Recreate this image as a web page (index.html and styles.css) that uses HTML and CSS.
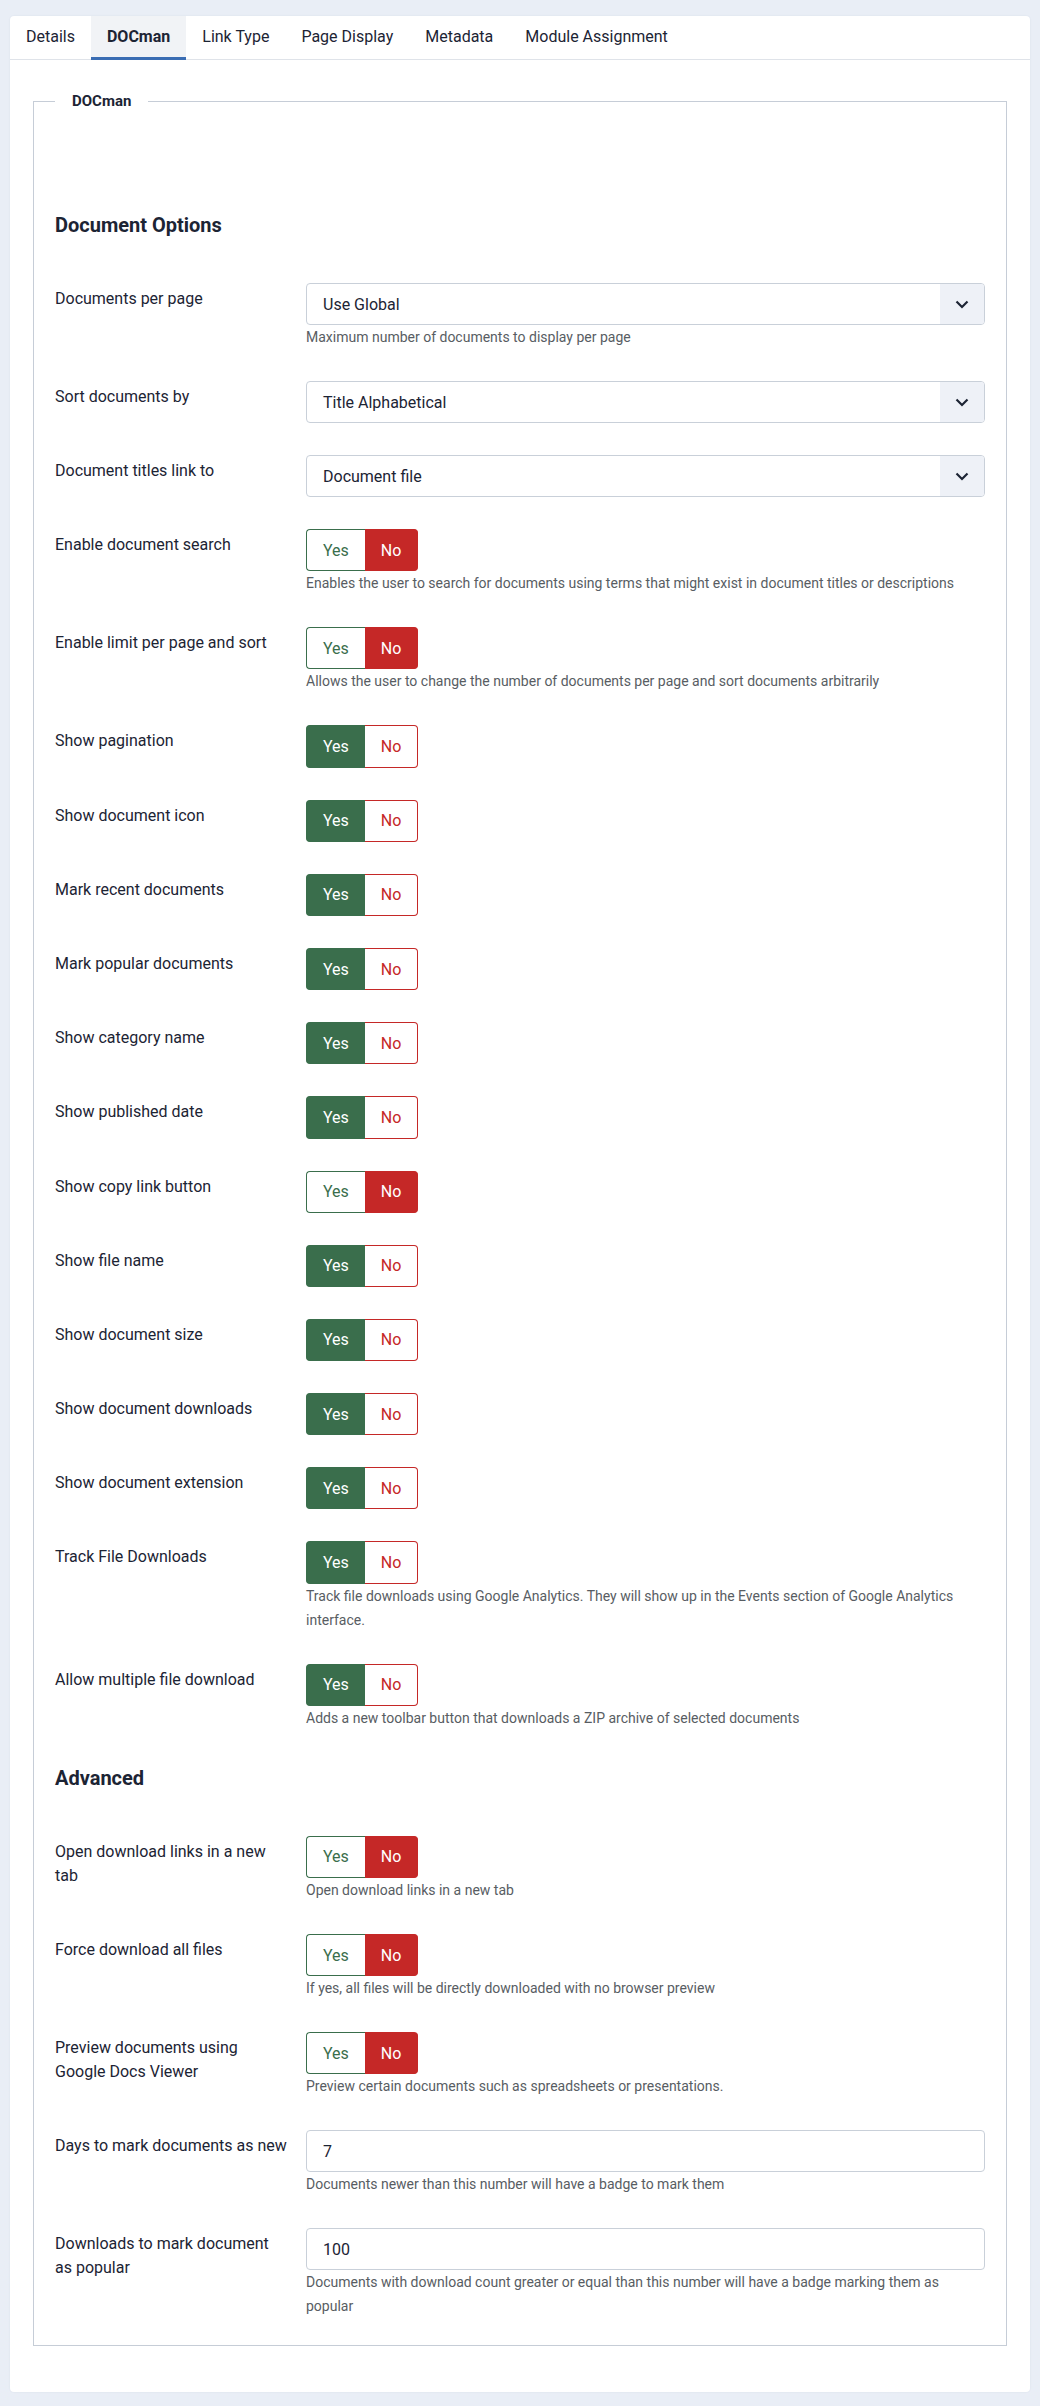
FILE: index.html
```html
<!DOCTYPE html>
<html lang="en">
  <head>
    <meta charset="UTF-8" />
    <meta name="viewport" content="width=device-width, initial-scale=1.0" />
    <title>Menu Item: DOCman</title>
    <link rel="stylesheet" href="styles.css">
  </head>
  <body>
    <div class="card">
      <ul class="tabs">
        <li class="tab">Details</li>
        <li class="tab active">DOCman</li>
        <li class="tab">Link Type</li>
        <li class="tab">Page Display</li>
        <li class="tab">Metadata</li>
        <li class="tab">Module Assignment</li>
      </ul>

      <div class="tab-content">
        <fieldset class="options">
          <legend>DOCman</legend>

          <h3 class="section-title first">Document Options</h3>

          <div class="control-group">
            <label class="control-label">Documents per page</label>
            <div class="controls">
              <div class="select">
                <span>Use Global</span>
                <span class="select-arrow">
                  <svg width="14" height="9" viewBox="0 0 14 9"><polyline points="1.5,1.5 7,7 12.5,1.5" fill="none" stroke="#1c2434" stroke-width="2.2" /></svg>
                </span>
              </div>
              <div class="help">Maximum number of documents to display per page</div>
            </div>
          </div>

          <div class="control-group">
            <label class="control-label">Sort documents by</label>
            <div class="controls">
              <div class="select">
                <span>Title Alphabetical</span>
                <span class="select-arrow">
                  <svg width="14" height="9" viewBox="0 0 14 9"><polyline points="1.5,1.5 7,7 12.5,1.5" fill="none" stroke="#1c2434" stroke-width="2.2" /></svg>
                </span>
              </div>
            </div>
          </div>

          <div class="control-group">
            <label class="control-label">Document titles link to</label>
            <div class="controls">
              <div class="select">
                <span>Document file</span>
                <span class="select-arrow">
                  <svg width="14" height="9" viewBox="0 0 14 9"><polyline points="1.5,1.5 7,7 12.5,1.5" fill="none" stroke="#1c2434" stroke-width="2.2" /></svg>
                </span>
              </div>
            </div>
          </div>

          <div class="control-group">
            <label class="control-label">Enable document search</label>
            <div class="controls">
              <div class="switch"><span class="yes">Yes</span><span class="no active">No</span></div>
              <div class="help">Enables the user to search for documents using terms that might exist in document titles or descriptions</div>
            </div>
          </div>

          <div class="control-group">
            <label class="control-label">Enable limit per page and sort</label>
            <div class="controls">
              <div class="switch"><span class="yes">Yes</span><span class="no active">No</span></div>
              <div class="help">Allows the user to change the number of documents per page and sort documents arbitrarily</div>
            </div>
          </div>

          <div class="control-group">
            <label class="control-label">Show pagination</label>
            <div class="controls">
              <div class="switch"><span class="yes active">Yes</span><span class="no">No</span></div>
            </div>
          </div>

          <div class="control-group">
            <label class="control-label">Show document icon</label>
            <div class="controls">
              <div class="switch"><span class="yes active">Yes</span><span class="no">No</span></div>
            </div>
          </div>

          <div class="control-group">
            <label class="control-label">Mark recent documents</label>
            <div class="controls">
              <div class="switch"><span class="yes active">Yes</span><span class="no">No</span></div>
            </div>
          </div>

          <div class="control-group">
            <label class="control-label">Mark popular documents</label>
            <div class="controls">
              <div class="switch"><span class="yes active">Yes</span><span class="no">No</span></div>
            </div>
          </div>

          <div class="control-group">
            <label class="control-label">Show category name</label>
            <div class="controls">
              <div class="switch"><span class="yes active">Yes</span><span class="no">No</span></div>
            </div>
          </div>

          <div class="control-group">
            <label class="control-label">Show published date</label>
            <div class="controls">
              <div class="switch"><span class="yes active">Yes</span><span class="no">No</span></div>
            </div>
          </div>

          <div class="control-group">
            <label class="control-label">Show copy link button</label>
            <div class="controls">
              <div class="switch"><span class="yes">Yes</span><span class="no active">No</span></div>
            </div>
          </div>

          <div class="control-group">
            <label class="control-label">Show file name</label>
            <div class="controls">
              <div class="switch"><span class="yes active">Yes</span><span class="no">No</span></div>
            </div>
          </div>

          <div class="control-group">
            <label class="control-label">Show document size</label>
            <div class="controls">
              <div class="switch"><span class="yes active">Yes</span><span class="no">No</span></div>
            </div>
          </div>

          <div class="control-group">
            <label class="control-label">Show document downloads</label>
            <div class="controls">
              <div class="switch"><span class="yes active">Yes</span><span class="no">No</span></div>
            </div>
          </div>

          <div class="control-group">
            <label class="control-label">Show document extension</label>
            <div class="controls">
              <div class="switch"><span class="yes active">Yes</span><span class="no">No</span></div>
            </div>
          </div>

          <div class="control-group">
            <label class="control-label">Track File Downloads</label>
            <div class="controls">
              <div class="switch"><span class="yes active">Yes</span><span class="no">No</span></div>
              <div class="help">Track file downloads using Google Analytics. They will show up in the Events section of Google Analytics interface.</div>
            </div>
          </div>

          <div class="control-group">
            <label class="control-label">Allow multiple file download</label>
            <div class="controls">
              <div class="switch"><span class="yes active">Yes</span><span class="no">No</span></div>
              <div class="help">Adds a new toolbar button that downloads a ZIP archive of selected documents</div>
            </div>
          </div>

          <h3 class="section-title">Advanced</h3>

          <div class="control-group">
            <label class="control-label">Open download links in a new tab</label>
            <div class="controls">
              <div class="switch"><span class="yes">Yes</span><span class="no active">No</span></div>
              <div class="help">Open download links in a new tab</div>
            </div>
          </div>

          <div class="control-group">
            <label class="control-label">Force download all files</label>
            <div class="controls">
              <div class="switch"><span class="yes">Yes</span><span class="no active">No</span></div>
              <div class="help">If yes, all files will be directly downloaded with no browser preview</div>
            </div>
          </div>

          <div class="control-group">
            <label class="control-label">Preview documents using Google Docs Viewer</label>
            <div class="controls">
              <div class="switch"><span class="yes">Yes</span><span class="no active">No</span></div>
              <div class="help">Preview certain documents such as spreadsheets or presentations.</div>
            </div>
          </div>

          <div class="control-group">
            <label class="control-label" for="days_new">Days to mark documents as new</label>
            <div class="controls">
              <input class="text-input" type="text" id="days_new" value="7" />
              <div class="help">Documents newer than this number will have a badge to mark them</div>
            </div>
          </div>

          <div class="control-group">
            <label class="control-label" for="hits_popular">Downloads to mark document as popular</label>
            <div class="controls">
              <input class="text-input" type="text" id="hits_popular" value="100" />
              <div class="help">Documents with download count greater or equal than this number will have a badge marking them as popular</div>
            </div>
          </div>
        </fieldset>
      </div>
    </div>
  </body>
</html>
```

FILE: styles.css
```css
body {
  margin: 0;
  padding: 16px 10px 12px;
  background: #e9eef6;
  font-family: Roboto, "Liberation Sans", sans-serif;
  color: #1c2434;
}
.card {
  background: #fff;
  border-radius: 4px;
  box-shadow: 0 0 2px rgba(30, 50, 90, 0.08);
}
.tabs {
  display: flex;
  margin: 0;
  padding: 0;
  list-style: none;
  border-bottom: 1px solid #dfe3e9;
}
.tab {
  height: 43px;
  line-height: 41px;
  padding: 0 16px;
  font-size: 16px;
  color: #1c2434;
  border-bottom: 3px solid transparent;
  box-sizing: border-box;
  margin-bottom: -1px;
}
.tab.active {
  font-weight: 700;
  background: #f1f3f6;
  border-bottom-color: #3a6db3;
  height: 44px;
}
.tab-content {
  padding: 31px 23px 46px;
}
.options {
  margin: 0;
  min-width: 0;
  border: 1px solid #c6cdd7;
  padding: 0 21px;
}
.options legend {
  padding: 0 17px;
  font-size: 15px;
  font-weight: 700;
  line-height: 20px;
  color: #1c2434;
}
.section-title {
  margin: 0 0 42px;
  font-size: 20px;
  font-weight: 700;
  line-height: 32px;
}
.section-title.first {
  margin-top: 98px;
}
.control-group {
  display: grid;
  grid-template-columns: 232px 1fr;
  column-gap: 19px;
  margin-bottom: 32px;
}
.control-group:last-child {
  margin-bottom: 27px;
}
.control-label {
  padding-top: 4px;
  font-size: 16px;
  line-height: 24px;
  color: #1c2434;
}
.select {
  display: flex;
  align-items: center;
  height: 42px;
  box-sizing: border-box;
  border: 1px solid #c9d0d9;
  border-radius: 4px;
  font-size: 16px;
  overflow: hidden;
}
.select span:first-child {
  flex: 1;
  padding-left: 16px;
}
.select-arrow {
  display: flex;
  align-items: center;
  justify-content: center;
  width: 44px;
  height: 100%;
  background: #eef1f7;
}
.text-input {
  display: block;
  width: 100%;
  height: 42px;
  box-sizing: border-box;
  border: 1px solid #c9d0d9;
  border-radius: 4px;
  padding: 0 16px;
  font-family: inherit;
  font-size: 16px;
  color: #1c2434;
}
.help {
  font-size: 14px;
  line-height: 24px;
  color: #585d63;
}
.switch {
  display: inline-flex;
  height: 42.2px;
  font-size: 16px;
}
.switch span {
  display: flex;
  align-items: center;
  padding: 0 16px;
  box-sizing: border-box;
}
.switch .yes {
  color: #3a6e4c;
  border: 1px solid #3a6e4c;
  border-right: 0;
  border-radius: 4px 0 0 4px;
}
.switch .no {
  color: #c52827;
  border: 1px solid #c52827;
  border-left: 0;
  border-radius: 0 4px 4px 0;
}
.switch .yes.active {
  background: #3a6e4c;
  color: #fff;
}
.switch .no.active {
  background: #c52827;
  color: #fff;
}
```
